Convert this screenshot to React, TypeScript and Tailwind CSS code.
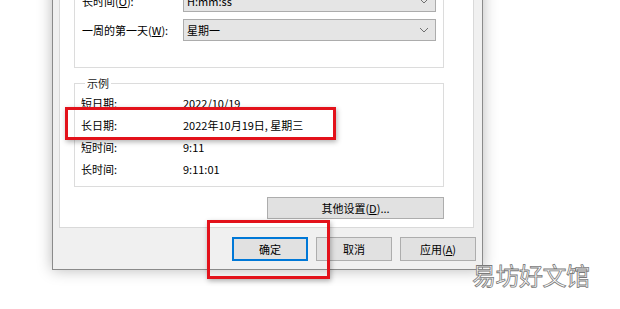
import React from "react";

const font = { fontFamily: '"Noto Sans CJK SC", "Noto Sans", sans-serif' };

function Chevron() {
  return (
    <svg width="10" height="6" viewBox="0 0 10 6" className="shrink-0">
      <path d="M1 1 L5 5 L9 1" fill="none" stroke="#707070" strokeWidth="1" />
    </svg>
  );
}

function Combo({ label, value }: { label: React.ReactNode; value: string }) {
  return (
    <div className="flex items-center h-[22px]">
      <div className="w-[108px] pl-[7px]">{label}</div>
      <div className="flex items-center justify-between w-[253px] h-[22px] bg-[#e5e5e5] border border-[#acacac] pl-[3px] pr-[6px]">
        <span>{value}</span>
        <Chevron />
      </div>
    </div>
  );
}

function Row({ k, v }: { k: string; v: string }) {
  return (
    <div className="flex items-center h-[22px]">
      <div className="w-[102px]">{k}</div>
      <div>{v}</div>
    </div>
  );
}

function Btn({ children, primary }: { children: React.ReactNode; primary?: boolean }) {
  return (
    <div
      className={
        "flex items-center justify-center w-[76px] h-[24px] bg-[#e1e1e1] " +
        (primary ? "border-2 border-[#0078d7]" : "border border-[#adadad]")
      }
    >
      {children}
    </div>
  );
}

export default function App() {
  return (
    <div className="relative w-[620px] h-[309px] bg-white overflow-hidden text-[11px] text-black" style={font}>
      <div className="ml-[52px] mt-[-60px] w-[431px] bg-[#f0f0f0] border border-[#8a8a8a] shadow-[0_0_14px_rgba(0,0,0,0.28)] pl-[6px] pt-[6px] pb-[8px]">
        <div className="w-[415px] bg-white border border-[#d9d9d9] pt-[12px] pb-[8px] pl-[14px]">
          <div className="w-[370px] h-[108px] border border-[#dcdcdc] pt-[29px] flex flex-col gap-[7px]">
            <Combo
              label={
                <span>
                  长时间(<span className="underline">O</span>):
                </span>
              }
              value="H:mm:ss"
            />
            <Combo
              label={
                <span>
                  一周的第一天(<span className="underline">W</span>):
                </span>
              }
              value="星期一"
            />
          </div>
          <fieldset className="mt-[8px] w-[370px] h-[111px] border border-[#dcdcdc] pl-[6px] pt-[0px]">
            <legend className="ml-[4px] px-[2px] text-[#222] leading-[15px]">示例</legend>
            <div className="flex flex-col pt-[1px]">
              <Row k="短日期:" v="2022/10/19" />
              <Row k="长日期:" v="2022年10月19日, 星期三" />
              <Row k="短时间:" v="9:11" />
              <Row k="长时间:" v="9:11:01" />
            </div>
          </fieldset>
          <div className="flex justify-end w-[370px] mt-[10px]">
            <div className="flex items-center justify-center w-[177px] h-[22px] bg-[#e1e1e1] border border-[#adadad]">
              其他设置(<span className="underline">D</span>)...
            </div>
          </div>
        </div>
        <div className="flex justify-end gap-[8px] pr-[6px] mt-[9px]">
          <Btn primary>确定</Btn>
          <Btn>取消</Btn>
          <Btn>
            <span>
              应用(<span className="underline">A</span>)
            </span>
          </Btn>
        </div>
      </div>

      <div className="absolute left-[65px] top-[107px] w-[271px] h-[33px] border-[3px] border-[#e3121b] shadow-[1px_2px_5px_rgba(0,0,0,0.3)]" />
      <div className="absolute left-[207px] top-[220px] w-[123px] h-[59px] border-[3px] border-[#e3121b] shadow-[1px_2px_5px_rgba(0,0,0,0.3)]" />

      <div className="absolute left-[472px] top-[259px] text-[24px] leading-[32px] text-white tracking-[-0.5px] [-webkit-text-stroke:0.8px_#7a7a7a]">
        易坊好文馆
      </div>
    </div>
  );
}
